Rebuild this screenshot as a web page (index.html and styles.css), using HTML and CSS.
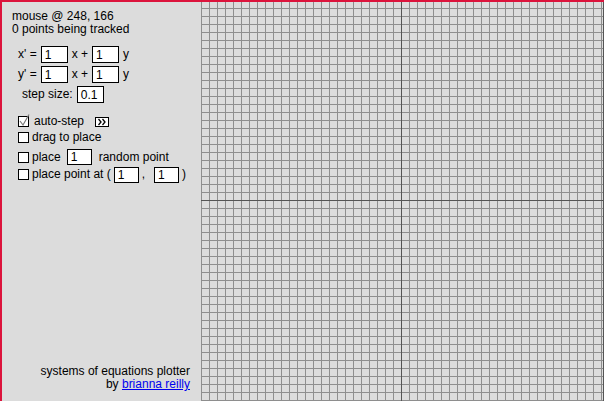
FILE: index.html
```html
<!DOCTYPE html>
<html>
<head>
<meta charset="utf-8">
<link rel="stylesheet" href="styles.css">
</head>
<body>
<div class="frame">
  <div class="panel">
    <div class="status">
      <div>mouse @ 248, 166</div>
      <div>0 points being tracked</div>
    </div>
    <div class="eqs">
      <div class="row"><span>x' =</span><span class="field">1</span><span>x +</span><span class="field">1</span><span>y</span></div>
      <div class="row"><span>y' =</span><span class="field">1</span><span>x +</span><span class="field">1</span><span>y</span></div>
      <div class="row step"><span>step size:</span><span class="field">0.1</span></div>
    </div>
    <div class="opts">
      <div class="opt opt-auto">
        <svg class="cb" width="13" height="13" viewBox="0 0 13 13"><rect x="0.5" y="2.5" width="10" height="10" fill="#fff" stroke="#000"/><polyline points="2,7 5,11 11,0.5" fill="none" stroke="#7a7a7a" stroke-width="1.2"/></svg>
        <span>auto-step</span>
        <svg class="ff" width="14" height="10" viewBox="0 0 14 10"><rect x="0.5" y="0.5" width="13" height="9" fill="#fff" stroke="#000"/><polyline points="3.5,2 6,5 3.5,8" fill="none" stroke="#000" stroke-width="1.3"/><polyline points="7.5,2 10,5 7.5,8" fill="none" stroke="#000" stroke-width="1.3"/></svg>
      </div>
      <div class="opt opt-drag">
        <span class="box"></span><span>drag to place</span>
      </div>
      <div class="opt opt-place">
        <span class="box"></span><span>place</span><span class="field small f-place">1</span><span class="after">random point</span>
      </div>
      <div class="opt opt-point">
        <span class="box"></span><span>place point at (</span><span class="field small">1</span><span>,</span><span class="field small f-second">1</span><span>)</span>
      </div>
    </div>
    <div class="credit">systems of equations plotter<br>by <a href="#">brianna reilly</a></div>
  </div>
  <div class="plot"></div>
</div>
</body>
</html>
```
FILE: styles.css
```css
html, body {
  margin: 0;
  padding: 0;
  height: 100%;
  overflow: hidden;
  background: #dcdcdc;
}

body {
  font-family: "Liberation Sans", Arial, sans-serif;
  font-size: 12px;
  line-height: 13px;
  color: #000;
}

.frame {
  display: flex;
  width: 602px;
  height: 399px;
  overflow: hidden;
  border-top: 2px solid #dc143c;
  border-left: 2px solid #dc143c;
}

.panel {
  width: 199px;
  height: 399px;
  box-sizing: border-box;
  display: flex;
  flex-direction: column;
  padding-top: 8px;
}

.status {
  padding-left: 10px;
}

.eqs {
  margin-top: 10px;
  display: flex;
  flex-direction: column;
  gap: 3px;
}

.row {
  display: flex;
  align-items: center;
  gap: 4px;
  height: 17px;
  padding-left: 16px;
}

.row.step {
  padding-left: 20px;
}

.field {
  display: inline-block;
  box-sizing: border-box;
  width: 27px;
  height: 17px;
  line-height: 16px;
  padding-left: 3px;
  background: #fff;
  border: 1px solid #000;
}

.field.small {
  width: 25px;
  height: 16px;
  line-height: 15px;
}

.opts {
  margin-top: 11px;
  display: flex;
  flex-direction: column;
}

.opt {
  display: flex;
  align-items: center;
  gap: 3px;
  padding-left: 16px;
}

.opt-auto { height: 15px; }
.opt-drag { height: 15px; margin-top: 1px; }
.opt-place { height: 16px; margin-top: 4px; }
.opt-point { height: 17px; margin-top: 1px; }

.cb {
  margin-top: -2px;
}

.ff {
  margin-left: 8px;
}

.box {
  display: inline-block;
  box-sizing: border-box;
  width: 11px;
  height: 11px;
  background: #fff;
  border: 1px solid #000;
}

.f-place { margin-left: 3px; }
.after { margin-left: 4px; }
.f-second { margin-left: 6px; }

.credit {
  margin-top: auto;
  text-align: right;
  padding-right: 11px;
  padding-bottom: 10px;
  line-height: 13px;
}

.credit a {
  color: #0000ee;
}

.plot {
  flex: none;
  width: 402px;
  height: 399px;
  border-right: 1px solid #555;
  background-color: #dcdcdc;
  background-image:
    linear-gradient(#555, #555),
    linear-gradient(#555, #555),
    linear-gradient(to right, #8e8e8e 1px, transparent 1px),
    linear-gradient(to bottom, #8e8e8e 1px, transparent 1px);
  background-size:
    1px 100%,
    100% 1px,
    8px 8px,
    8px 8px;
  background-position:
    200px 0,
    0 198px,
    0 0,
    0 6px;
  background-repeat:
    no-repeat,
    no-repeat,
    repeat,
    repeat;
}
```
